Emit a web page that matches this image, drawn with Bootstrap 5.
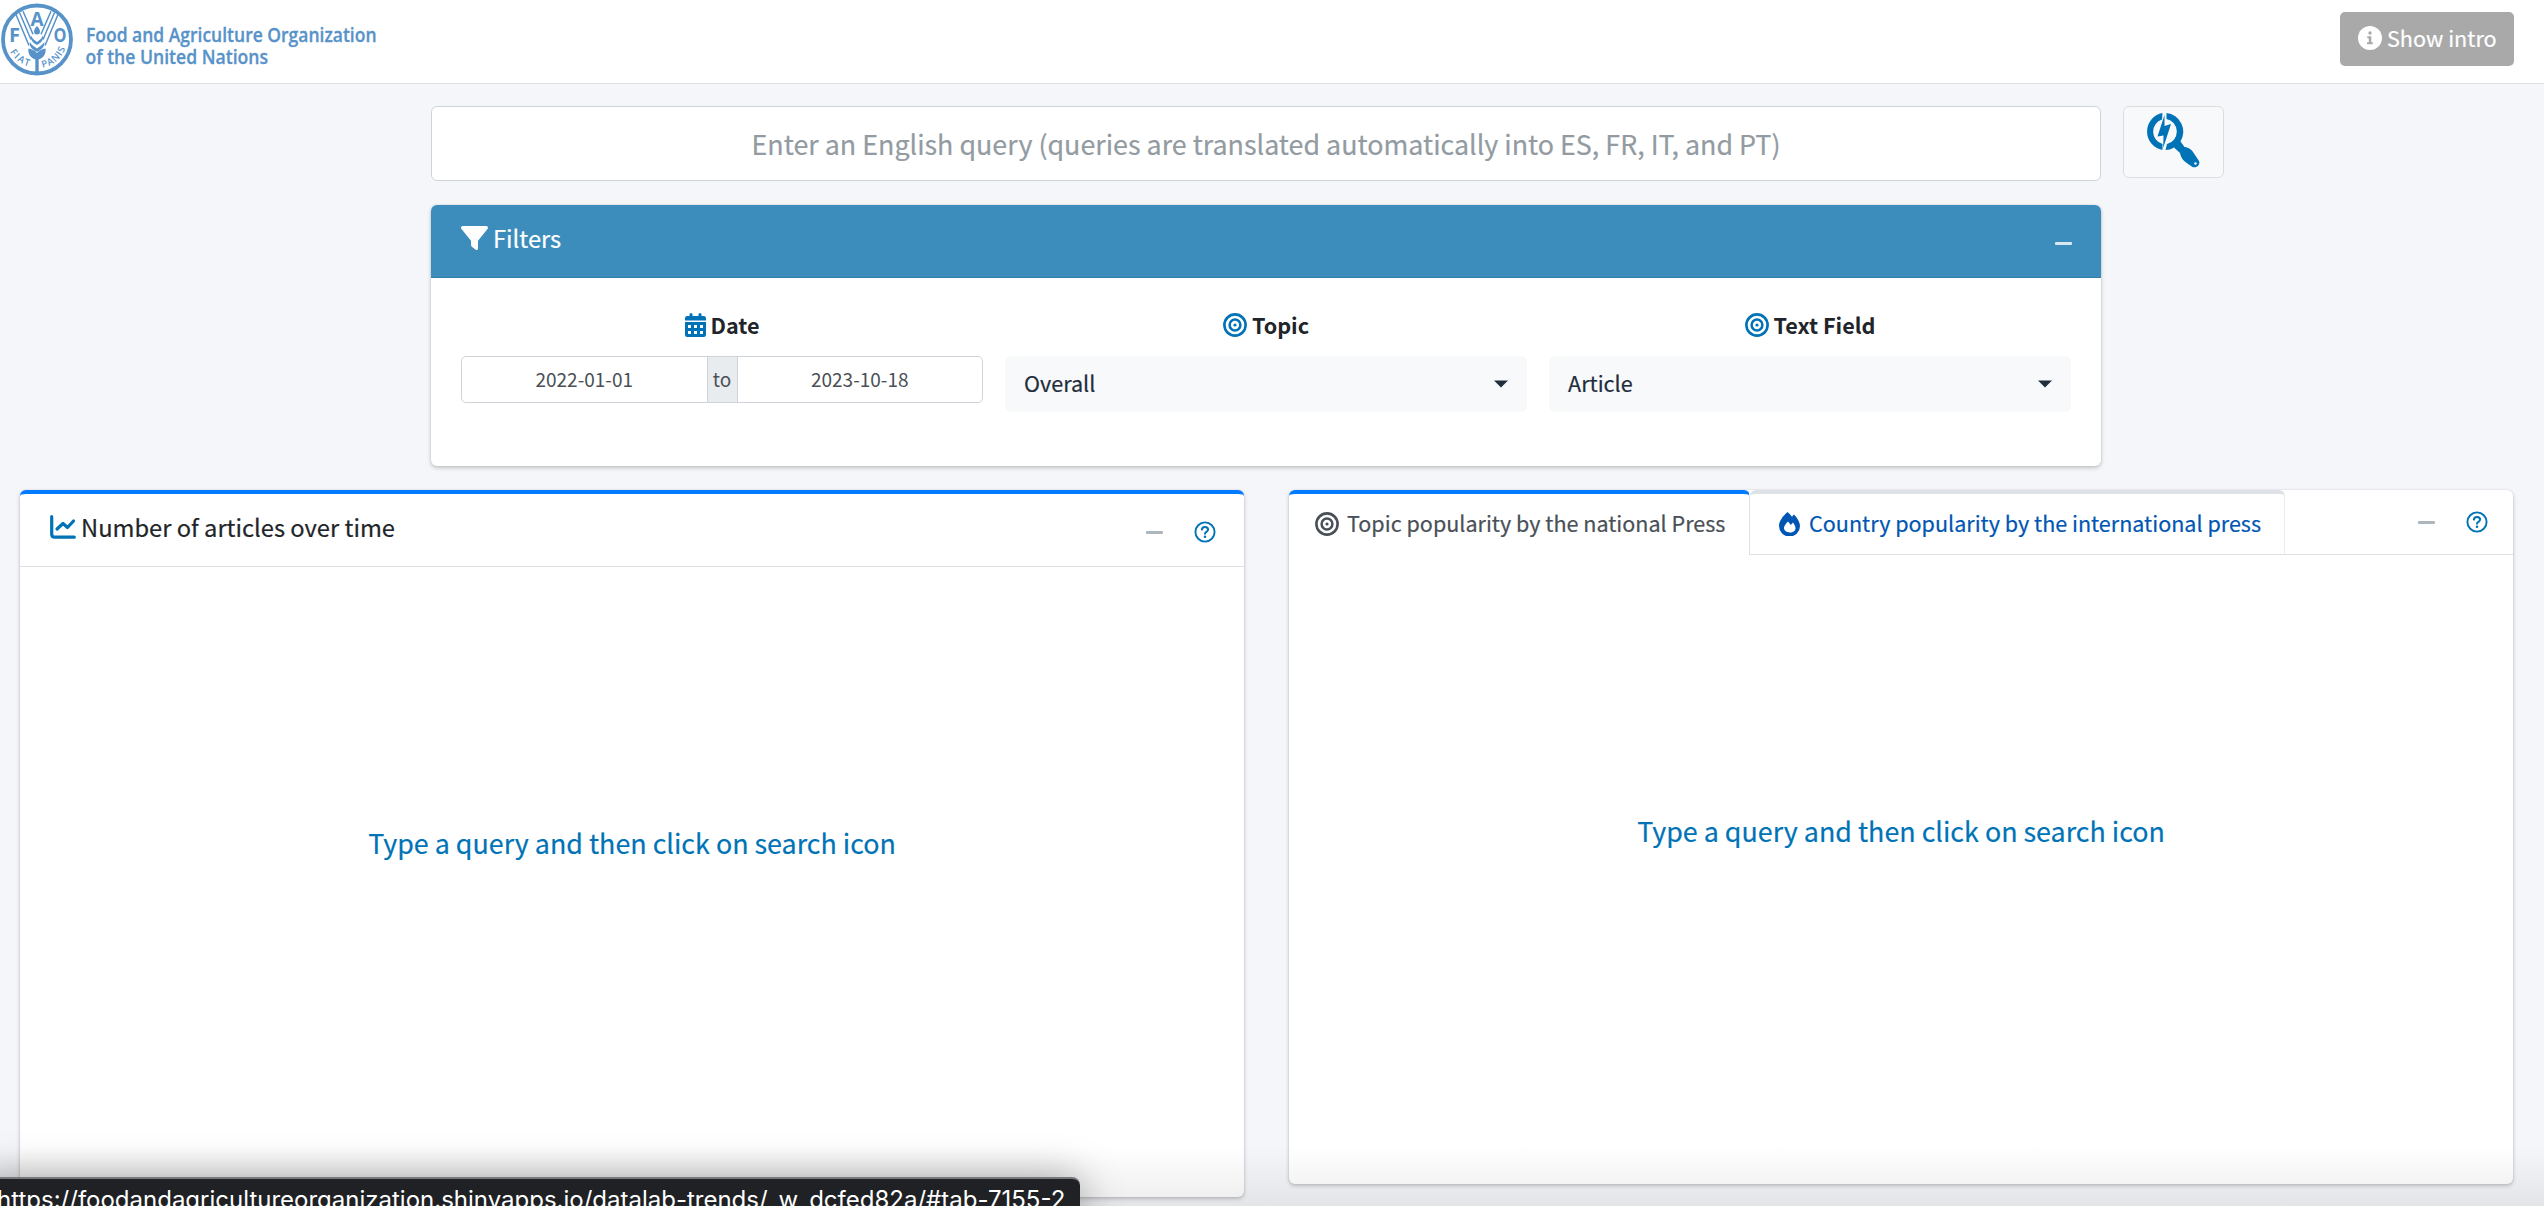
<!DOCTYPE html>
<html lang="en">
<head>
<meta charset="utf-8">
<title>FAO Datalab Trends</title>
<link href="https://cdn.jsdelivr.net/npm/bootstrap@5.3.0/dist/css/bootstrap.min.css" rel="stylesheet">
<style>
body{background:#f4f6f9;font-family:"Noto Sans CJK SC",sans-serif;font-size:21px;line-height:1;color:#212529;height:1206px;overflow:hidden;position:relative}
svg{display:block;flex:none}
.t{white-space:nowrap;line-height:30px;display:block;-webkit-text-stroke:.2px currentColor}
.top-bar{height:84px;background:#fff;border-bottom:1px solid #dee2e6;padding:0 30px 0 1px}
.intro-btn{width:174px;height:54px;background:#a9a9a9;border:0;color:#fff;border-radius:5px;margin-top:12px;padding:0 0 2px 18px}
.search-row{margin:22px 0 0 431px;gap:22px}
.query-box{width:1670px;height:75px;border:1px solid #ced4da;border-radius:6px;color:#939ba2}
.search-btn{width:101px;height:72px;background:#f8f9fa;border:1px solid #ddd;border-radius:6px;padding:5px 0 0 21px}
.panel{background:#fff;border-radius:6px;box-shadow:0 0 2px rgba(0,0,0,.13),0 2px 4px rgba(0,0,0,.2)}
.filters{width:1670px;height:261px;margin:24px 0 0 431px}
.filters-head{height:73px;background:#3c8dbc;border-bottom:1px solid #367fa9;border-radius:6px 6px 0 0;color:#fff;padding:0 29px 6px 30px}
.filters-body{padding:33px 30px 0;gap:22px}
.fcol{flex:1 1 0}
.flabel{height:27px;font-weight:700}
.flabel .t{-webkit-text-stroke:0}
.date-range{height:47px;margin-top:18px;border:1px solid #ced4da;border-radius:5px;color:#495057;background:#fff}
.date-range .t{padding-bottom:2px;-webkit-text-stroke:0}
.date-sep{width:31px;background:#e9ecef;border:solid #ced4da;border-width:0 1px}
.pick{height:56px;margin-top:18px;background:#f8f9fa;border-radius:6px;color:#1f2d3d;padding:0 19px 0 19px}
.pick .t{padding-bottom:2px}
.boards{margin:24px 31px 0 20px;gap:45px}
.board{width:1224px;border-radius:6px}
.b-left{height:707px;border-top:4px solid #007bff}
.b-left-head{height:73px;border-bottom:1px solid #dfdfdf;padding:0 28px 0 30px}
.b-right{height:694px}
.tab-strip{height:65px;border-bottom:1px solid #dee2e6}
.tab-on{width:461px;height:65px;background:#fff;border-top:4px solid #007bff;border-right:1px solid #dee2e6;border-radius:6px 6px 0 0;color:#495057;padding:0 0 2px 26px}
.tab-off{width:535px;height:64px;border-top:4px solid #dee2e6;border-right:1px solid #e9ecef;border-radius:6px 6px 0 0;color:#0056b3;padding:0 0 1px 29px}
.tab-on .t,.tab-off .t{padding-bottom:1px}
.dash{width:17px;height:3px;border-radius:1px;background:#adb5bd}
.hint{color:#0073b7}
.empty-note{padding-top:261px}
.bottom-shade{position:absolute;left:0;right:0;bottom:0;height:60px;background:linear-gradient(rgba(0,0,0,0),rgba(0,0,0,.07));pointer-events:none}
.status-bar{position:absolute;left:-20px;top:1177px;width:1100px;height:50px;background:#202124;border-top:2px solid #77787a;border-radius:0 8px 0 0;box-shadow:0 0 40px rgba(0,0,0,.35);padding:6px 16px 0 17px;color:#fff;font-family:Inter,sans-serif}
.status-bar .t{-webkit-text-stroke:0}
</style>
</head>
<body>
<svg width="0" height="0" class="position-absolute"><defs>
<symbol id="bull" viewBox="0 0 24 24"><g fill="none" stroke="currentColor"><circle cx="12" cy="12" r="10.6" stroke-width="2.6"/><circle cx="12" cy="12" r="5.4" stroke-width="2.5"/></g><circle cx="12" cy="12" r="1.6" fill="currentColor"/></symbol>
<symbol id="ask" viewBox="0 0 22 22"><circle cx="11" cy="11" r="9.6" fill="none" stroke="currentColor" stroke-width="1.9"/><path d="M7.9 8.6c.2-1.7 1.2-2.5 3-2.5 1.900 0 3.200.9 3.200 2.500 0 2.300-3.100 2.100-3.100 4.200" fill="none" stroke="currentColor" stroke-width="2" stroke-linecap="round"/><circle cx="11" cy="15.700" r="1.300" fill="currentColor"/></symbol>
<symbol id="caret" viewBox="0 0 14 8"><path d="M0 .5h14L7 7.500z" fill="#1f2d3d"/></symbol>
</defs></svg>

<header class="top-bar d-flex justify-content-between align-items-start">
    <svg width="380" height="76" viewBox="1 0 380 76" fill="#5792c9">
      <circle cx="37" cy="39.500" r="34" fill="none" stroke="#5792c9" stroke-width="3.800"/>
      <path d="M35.300 57h3.400v17h-3.400z"/>
      <path d="M28.500 48.500c3 .2 6.500 2 8.500 4.500 2-2.500 5.500-4.300 8.500-4.500.8 4.500-1.500 9.500-7 11h-3c-5.500-1.500-7.800-6.500-7-11z"/>
      <path d="M37 26c2 2.200 3 4 3 5.500a3 3 0 0 1-6 0c0-1.500 1-3.300 3-5.500zM31 35.500c1.500 3.500 4 5 6 6.500 2-1.500 4.500-3 6-6.500.6 4-1 7-6 9.500-5-2.500-6.600-5.500-6-9.500zM29.700 42c2.300 3.200 5.300 5 7.300 6.500 2-1.500 5-3.300 7.300-6.500.6 4-2 7.500-7.300 9.800-5.300-2.300-7.900-5.800-7.300-9.800z"/>
      <path d="M16 14.500l13 31M19.500 12.500l11.500 27M23 11.200l10 23M58 14.500l-13 31M54.500 12.500l-11.500 27M51 11.200l-10 23" fill="none" stroke="#5792c9" stroke-width="1.500"/>
      <g font-family="Open Sans" font-weight="700" text-anchor="middle"><text x="14.500" y="41.500" font-size="20">F</text><text x="37" y="25.800" font-size="19">A</text><text x="60" y="41.500" font-size="19" textLength="13" lengthAdjust="spacingAndGlyphs">O</text></g>
      <path id="arc1" d="M10 52A29.500 29.500 0 0 0 34 67" fill="none"/><path id="arc2" d="M42.500 67.500A29 29 0 0 0 66 46" fill="none"/>
      <g font-family="Open Sans" font-weight="600" font-size="9.500"><text letter-spacing="1.500"><textPath href="#arc1">FIAT</textPath></text><text letter-spacing=".8"><textPath href="#arc2">PANIS</textPath></text></g>
      <g font-family="Open Sans" font-weight="600" font-size="19.500" stroke="#5792c9" stroke-width=".3"><text x="86" y="41.500" textLength="290.500" lengthAdjust="spacingAndGlyphs">Food and Agriculture Organization</text><text x="85.500" y="64" textLength="182.500" lengthAdjust="spacingAndGlyphs">of the United Nations</text></g>
    </svg>
  <button class="intro-btn btn d-flex align-items-center">
    <svg width="24" height="24" viewBox="0 0 24 24"><circle cx="12" cy="12" r="12" fill="#fff"/><circle cx="12" cy="7" r="1.700" fill="#a9a9a9"/><path d="M9.300 10.300h4v6h1.500v1.900H9v-1.900h1.800v-4H9.300z" fill="#a9a9a9"/></svg>
    <span class="t" style="font-size:21.600px;margin-left:5px">Show intro</span>
  </button>
</header>

<div class="search-row d-flex">
  <div class="query-box bg-white d-flex align-items-center justify-content-center"><span class="t" style="font-size:26.850px">Enter an English query (queries are translated automatically into ES, FR, IT, and PT)</span></div>
  <div class="search-btn"><svg width="56" height="56" viewBox="0 0 56 56" fill="#0073b7"><path d="M17.500 1A18.800 18.800 0 0 0 17.500 38V32A12.800 12.800 0 0 1 17 7.500zM21.500 1v6A12.800 12.800 0 0 1 22 32L20.500 38c3 0 6-.8 8.500-2.500l6 5.500c1 5 3 7 6 9.500l6.500 4.500c4 1.500 8-2 6.500-6l-5-7.500c-2.500-4-5-6-9.500-6.500l-4-5.500A18.800 18.800 0 0 0 21.500 1z"/><path d="M19.500 3l-7 21.500 6-1-.3 12.500 7.800-24-6.500 2z"/><circle cx="50.500" cy="51.500" r="1.200" fill="#f8f9fa"/></svg></div>
</div>

<section class="panel filters">
  <div class="filters-head d-flex align-items-center justify-content-between">
    <div class="d-flex align-items-center"><svg width="27" height="24" viewBox="0 0 27 24"><path d="M1.800 0h23.400c1.600 0 2.300 1.700 1.300 3L17 14.700v7.800c0 1.300-1.300 1.900-2.300 1.200l-3.800-2.900c-.6-.5-.9-1-.9-1.800v-4.300L.5 3C-.5 1.700.2 0 1.800 0z" fill="#fff"/></svg><span class="t" style="font-size:23.700px;margin-left:5px">Filters</span></div>
    <span class="dash" style="background:#d8e8f1;margin-top:10px"></span>
  </div>
  <div class="filters-body d-flex">
    <div class="fcol"><div class="flabel d-flex align-items-center justify-content-center"><svg width="21" height="24" viewBox="0 0 21 24" fill="#0073b7"><path d="M4.500 1.500a1.500 1.500 0 0 1 3 0V3h6V1.500a1.500 1.500 0 0 1 3 0V3h2.300A2.200 2.200 0 0 1 21 5.200V7.500H0V5.200A2.200 2.200 0 0 1 2.200 3h2.300zM0 9h21v12.800a2.200 2.200 0 0 1-2.200 2.200H2.200A2.200 2.200 0 0 1 0 21.800z"/><path d="M3 12h3v3H3zm6 0h3v3H9zm6 0h3v3h-3zM3 18h3v3H3zm6 0h3v3H9zm6 0h3v3h-3z" fill="#fff"/></svg><span class="t" style="font-size:21.600px;margin-left:5px">Date</span></div>
      <div class="date-range d-flex align-items-stretch"><div class="flex-fill d-flex align-items-center justify-content-center"><span class="t" style="font-size:19px">2022-01-01</span></div><div class="date-sep d-flex align-items-center justify-content-center"><span class="t" style="font-size:19px">to</span></div><div class="flex-fill d-flex align-items-center justify-content-center"><span class="t" style="font-size:19px">2023-10-18</span></div></div></div>
    <div class="fcol"><div class="flabel d-flex align-items-center justify-content-center"><svg width="24" height="24" class="hint"><use href="#bull"/></svg><span class="t" style="font-size:21.600px;margin-left:5px">Topic</span></div>
      <div class="pick d-flex align-items-center justify-content-between"><span class="t" style="font-size:21.600px">Overall</span><svg width="14" height="8"><use href="#caret"/></svg></div></div>
    <div class="fcol"><div class="flabel d-flex align-items-center justify-content-center"><svg width="24" height="24" class="hint"><use href="#bull"/></svg><span class="t" style="font-size:21.600px;margin-left:5px">Text Field</span></div>
      <div class="pick d-flex align-items-center justify-content-between"><span class="t" style="font-size:21.600px">Article</span><svg width="14" height="8"><use href="#caret"/></svg></div></div>
  </div>
</section>

<main class="boards d-flex align-items-start">
  <section class="panel board b-left">
    <div class="b-left-head d-flex align-items-center justify-content-between">
      <div class="d-flex align-items-center" style="padding-bottom:7px"><svg width="26" height="24" viewBox="0 0 26 24" fill="none" stroke="#0073b7" stroke-width="3.200" stroke-linecap="round" stroke-linejoin="round"><path d="M1.700 1.700v17.500q0 3 3 3H24.300M7 14l6-5.500 4.500 4L23.500 6"/></svg><span class="t" style="font-size:23.700px;margin-left:5px">Number of articles over time</span></div>
      <div class="d-flex align-items-center pt-1"><span class="dash"></span><svg width="22" height="22" class="hint" style="margin-left:31px"><use href="#ask"/></svg></div>
    </div>
    <div class="text-center empty-note"><span class="t hint" style="font-size:26.850px">Type a query and then click on search icon</span></div>
  </section>
  <section class="panel board b-right">
    <div class="tab-strip d-flex">
      <div class="tab-on d-flex align-items-center"><svg width="24" height="24"><use href="#bull"/></svg><span class="t" style="font-size:21.550px;margin-left:8px">Topic popularity by the national Press</span></div>
      <div class="tab-off d-flex align-items-center"><svg width="21" height="24" viewBox="0 0 21 24"><path d="M8.500 0c1.800 1.500 3.200 3 4.500 4.800.6-.8 1.200-1.600 2-2.300C18 5.500 21 10 21 14a10.400 10.400 0 0 1-21 0C0 9 4 4 8.500 0z" fill="#0056b3"/><path d="M9 9.500c1 1 2 2.300 2.800 3.400L14 10.500c1.500 2 2.500 4 2.500 5.500 0 3-2.500 4.500-5.500 4.500-3.500 0-6-2-6-4.700 0-2 2-4.300 4-6.300z" fill="#fff"/></svg><span class="t" style="font-size:21.550px;margin-left:9px">Country popularity by the international press</span></div>
      <div class="ms-auto d-flex align-items-center" style="padding-right:25px"><span class="dash"></span><svg width="22" height="22" class="hint" style="margin-left:31px"><use href="#ask"/></svg></div>
    </div>
    <div class="text-center empty-note"><span class="t hint" style="font-size:26.850px">Type a query and then click on search icon</span></div>
  </section>
</main>
<div class="bottom-shade"></div>
<div class="status-bar"><span class="t" style="font-size:24px">https://foodandagricultureorganization.shinyapps.io/datalab-trends/_w_dcfed82a/#tab-7155-2</span></div>
<script src="https://cdn.jsdelivr.net/npm/bootstrap@5.3.0/dist/js/bootstrap.bundle.min.js"></script>
</body>
</html>
